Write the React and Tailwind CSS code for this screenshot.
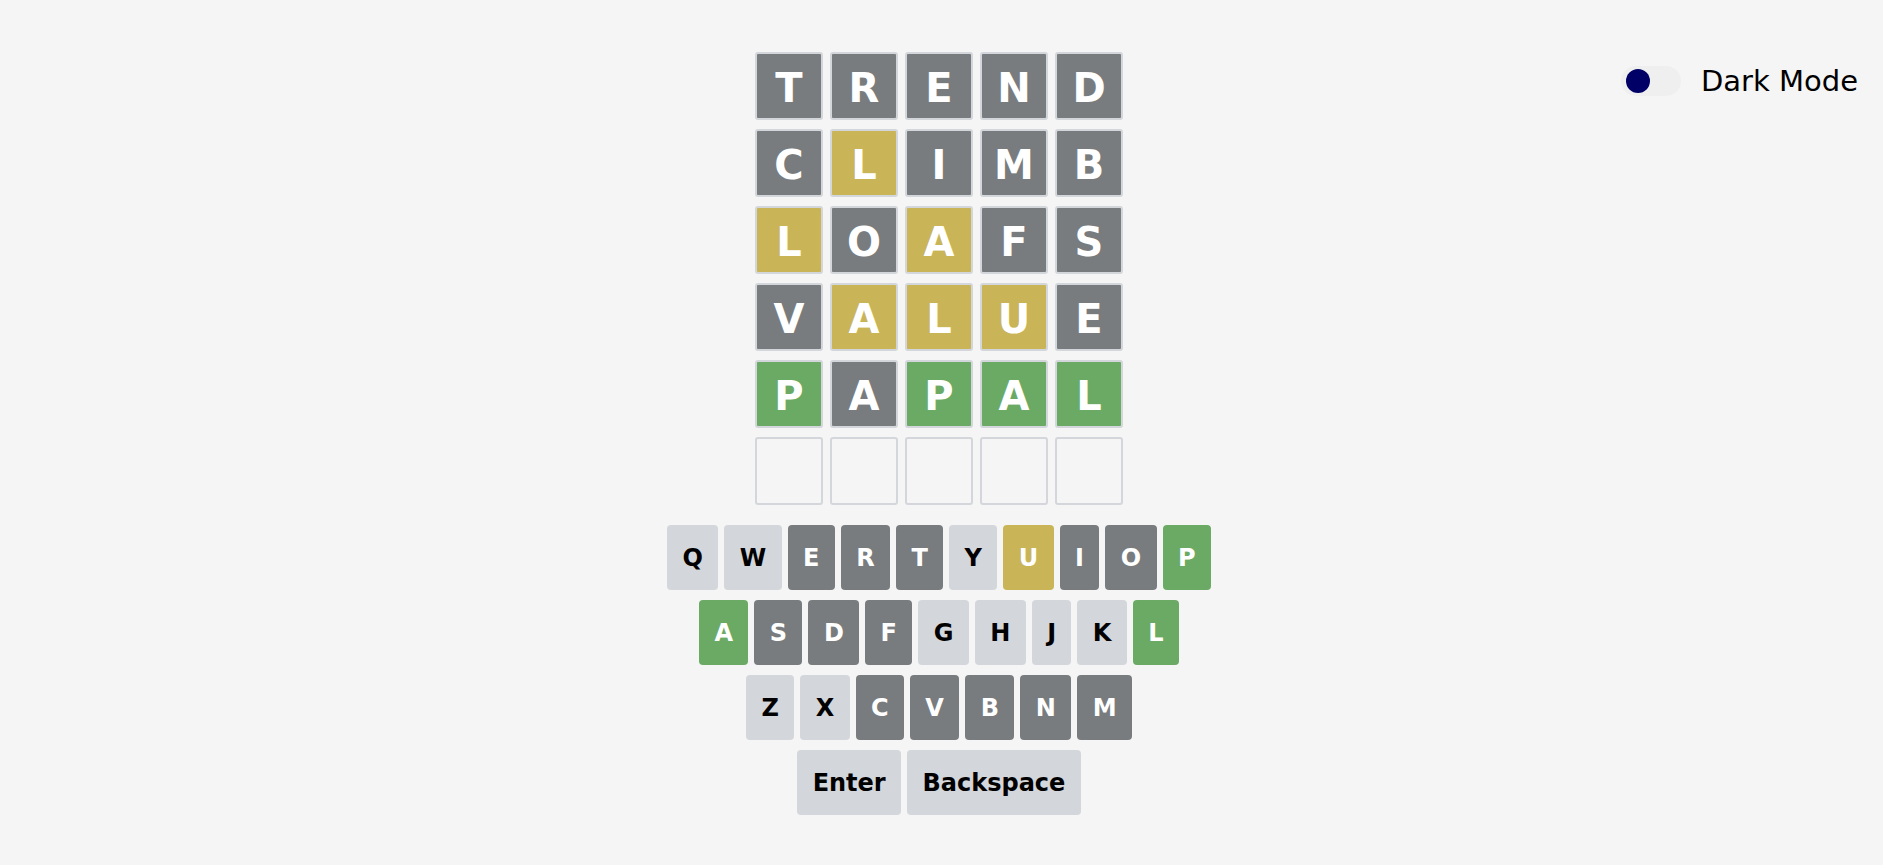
import React from "react";

const GUESSES = [
  ["TREND", "ggggg"],
  ["CLIMB", "gyggg"],
  ["LOAFS", "ygygg"],
  ["VALUE", "gyyyg"],
  ["PAPAL", "cgccc"],
  ["     ", "eeeee"],
];

const ROWS = [
  ["Q", "W", "E", "R", "T", "Y", "U", "I", "O", "P"],
  ["A", "S", "D", "F", "G", "H", "J", "K", "L"],
  ["Z", "X", "C", "V", "B", "N", "M"],
];

// letter -> state shown on the keyboard
const KEYS = {
  E: "g", R: "g", T: "g", U: "y", I: "g", O: "g", P: "c",
  A: "c", S: "g", D: "g", F: "g", L: "c",
  C: "g", V: "g", B: "g", N: "g", M: "g",
};

const tileColor = {
  g: "bg-[#787c7e] text-white",
  y: "bg-[#c9b458] text-white",
  c: "bg-[#6aaa64] text-white",
  e: "bg-transparent",
};

const keyColor = {
  g: "bg-[#787c7e] text-white",
  y: "bg-[#c9b458] text-white",
  c: "bg-[#6aaa64] text-white",
  n: "bg-[#d3d6da] text-black",
};

function Tile({ letter, state }) {
  return (
    <div
      className={`w-[68px] h-[68px] flex items-center justify-center pt-1 border-2 border-[#d3d6da] rounded-[3px] text-[40px] font-bold leading-none ${tileColor[state]}`}
    >
      {letter.trim()}
    </div>
  );
}

function Key({ label, state = "n" }) {
  return (
    <button
      className={`h-[65px] px-[15.4px] flex items-center justify-center rounded-[4px] text-[24px] font-bold leading-none ${keyColor[state]}`}
    >
      {label}
    </button>
  );
}

export default function App() {
  const [dark, setDark] = React.useState(false);

  return (
    <div
      className="min-h-screen bg-[#f5f5f5] text-black grid grid-cols-[1fr_auto_1fr] pr-[5px]"
      style={{ fontFamily: '"DejaVu Sans", Verdana, sans-serif' }}
    >
      <div />

      <div className="flex flex-col items-center pt-[52px]">
        {/* board */}
        <div className="flex flex-col gap-[9px]">
          {GUESSES.map(([word, states], r) => (
            <div key={r} className="flex gap-[7px]">
              {word.split("").map((ch, i) => (
                <Tile key={i} letter={ch} state={states[i]} />
              ))}
            </div>
          ))}
        </div>

        {/* keyboard */}
        <div className="flex flex-col items-center gap-[10px] mt-[20px]">
          {ROWS.map((row, r) => (
            <div key={r} className="flex gap-[6px]">
              {row.map((k) => (
                <Key key={k} label={k} state={KEYS[k] || "n"} />
              ))}
            </div>
          ))}
          <div className="flex gap-[6px]">
            <Key label="Enter" />
            <Key label="Backspace" />
          </div>
        </div>
      </div>

      <div className="flex justify-end items-start pt-[66px] pr-[20px]">
        <label className="flex items-center gap-5 cursor-pointer">
          <button
            onClick={() => setDark((d) => !d)}
            className="w-[60px] h-[30px] rounded-full bg-[#efefef] flex items-center px-[5px]"
            aria-label="Toggle dark mode"
          >
            <span className="w-[24px] h-[24px] rounded-full bg-[#000066]" />
          </button>
          <span className="text-[29px] leading-none">Dark Mode</span>
        </label>
      </div>
    </div>
  );
}
